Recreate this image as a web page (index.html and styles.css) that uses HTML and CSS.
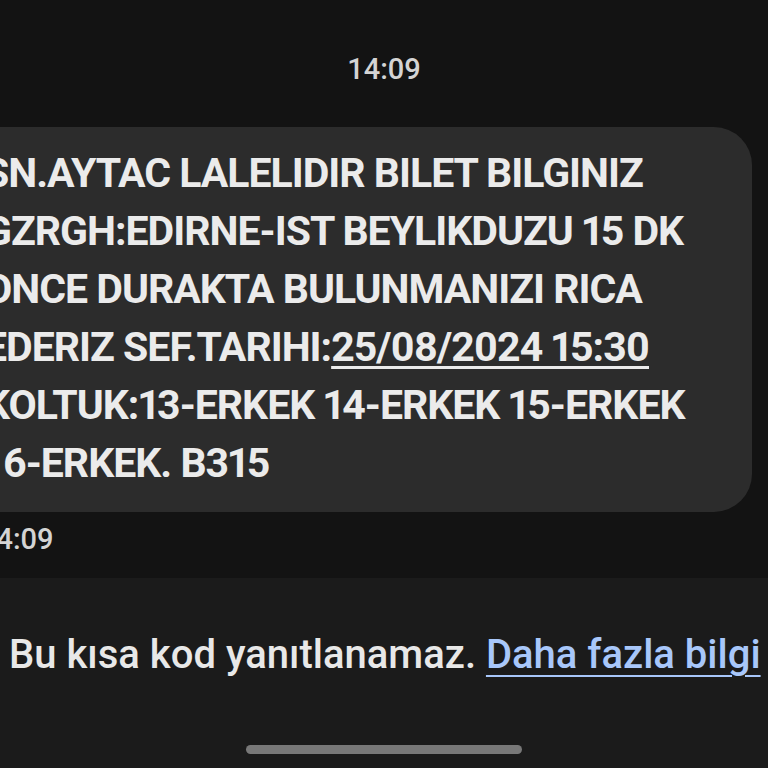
FILE: index.html
```html
<!DOCTYPE html>
<html lang="tr">
    <head>
        <meta charset="UTF-8" />
        <meta name="viewport" content="width=device-width, initial-scale=1.0" />
        <title>Mesajlar</title>
        <link rel="stylesheet" href="styles.css">
    </head>
    <body>
        <main class="screen">
            <section class="thread">
                <div class="day-time">14:09</div>

                <div class="bubble">
                    <p class="message">
                        <span class="line">SN.AYTAC LALELIDIR BILET BILGINIZ</span>
                        <span class="line">GZRGH:EDIRNE-IST BEYLIKDUZU 15 DK</span>
                        <span class="line">ONCE DURAKTA BULUNMANIZI RICA</span>
                        <span class="line">EDERIZ SEF.TARIHI:<a class="date" href="#">25/08/2024 15:30</a></span>
                        <span class="line">KOLTUK:13-ERKEK 14-ERKEK 15-ERKEK</span>
                        <span class="line">16-ERKEK. B315</span>
                    </p>
                </div>

                <div class="msg-time">14:09</div>
            </section>

            <footer class="notice">
                <p class="notice-text">Bu kısa kod yanıtlanamaz. <a href="#">Daha fazla bilgi</a></p>
                <div class="home-bar"></div>
            </footer>
        </main>
    </body>
</html>
```

FILE: styles.css
```css
body {
    margin: 0;
    background-color: #131313;
    font-family: Roboto, "Noto Sans", sans-serif;
}

.screen {
    width: 768px;
    height: 768px;
    overflow: hidden;
}

.thread {
    height: 578px;
    box-sizing: border-box;
    padding-top: 52px;
}

.day-time {
    font-size: 29px;
    font-weight: 500;
    line-height: 34px;
    color: #d4d4d4;
    text-align: center;
}

.bubble {
    margin: 41px 16px 0 -60px;
    padding: 17px 20px 20px 44px;
    background-color: #2c2c2c;
    border-radius: 0 38px 38px 0;
}

.message {
    margin: 0;
    font-size: 41px;
    font-weight: 700;
    line-height: 58px;
    letter-spacing: -1px;
    font-feature-settings: "pnum";
    font-variant-numeric: proportional-nums;
    color: #ebebeb;
}

.line {
    display: block;
    white-space: nowrap;
}

.date {
    color: inherit;
    text-decoration: underline;
    text-decoration-thickness: 3px;
    text-underline-offset: 5px;
}

.msg-time {
    margin: 10px 0 0 -20px;
    font-size: 29px;
    font-weight: 500;
    line-height: 34px;
    color: #d4d4d4;
}

.notice {
    height: 190px;
    box-sizing: border-box;
    padding-top: 53px;
    background-color: #1b1b1b;
}

.notice-text {
    margin: 0;
    padding-left: 9px;
    font-size: 40px;
    font-weight: 500;
    line-height: 48px;
    color: #e8e8e8;
    white-space: nowrap;
}

.notice-text a {
    color: #a8c7fa;
    text-decoration-thickness: 2px;
    text-underline-offset: 7px;
}

.home-bar {
    width: 276px;
    height: 9px;
    margin: 66px auto 0;
    border-radius: 5px;
    background-color: #787878;
}
```
